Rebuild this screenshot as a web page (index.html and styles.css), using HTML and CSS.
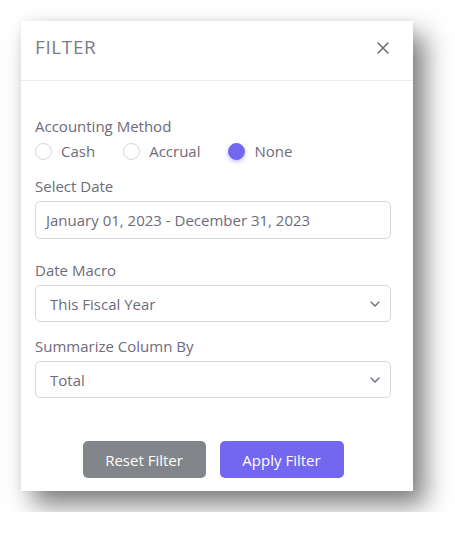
FILE: index.html
```html
<!DOCTYPE html>
<html lang="en">
<head>
<meta charset="utf-8">
<title>Filter</title>
<link rel="stylesheet" href="styles.css">
</head>
<body>
<div class="modal">
  <div class="modal-header">
    <h2 class="modal-title">FILTER</h2>
    <button class="close" aria-label="Close">
      <svg width="12" height="12" viewBox="0 0 12 12"><path d="M1 1L11 11M11 1L1 11" stroke="#6e6b7b" stroke-width="1.6" stroke-linecap="round"/></svg>
    </button>
  </div>
  <div class="modal-body">
    <div class="label">Accounting Method</div>
    <div class="radios">
      <label class="radio"><span class="dot"></span>Cash</label>
      <label class="radio"><span class="dot"></span>Accrual</label>
      <label class="radio"><span class="dot checked"></span>None</label>
    </div>
    <div class="label label-date">Select Date</div>
    <div class="input">January 01, 2023 - December 31, 2023</div>
    <div class="label label-macro">Date Macro</div>
    <div class="select"><span>This Fiscal Year</span>
      <svg width="10" height="6" viewBox="0 0 10 6"><path d="M1 1L5 5L9 1" fill="none" stroke="#6e6b7b" stroke-width="1.4" stroke-linecap="round" stroke-linejoin="round"/></svg>
    </div>
    <div class="label label-sum">Summarize Column By</div>
    <div class="select"><span>Total</span>
      <svg width="10" height="6" viewBox="0 0 10 6"><path d="M1 1L5 5L9 1" fill="none" stroke="#6e6b7b" stroke-width="1.4" stroke-linecap="round" stroke-linejoin="round"/></svg>
    </div>
    <div class="actions">
      <button class="btn btn-reset">Reset Filter</button>
      <button class="btn btn-apply">Apply Filter</button>
    </div>
  </div>
</div>
</body>
</html>
```
FILE: styles.css
```css
* { box-sizing: border-box; }
html, body { margin: 0; background: #fff; }
body {
  padding: 21px;
  font-family: "Open Sans", "Liberation Sans", sans-serif;
  color: #6e6b7b;
  font-size: 15px;
}
.modal {
  width: 392px;
  height: 470px;
  background: #fff;
  box-shadow: 12px 14px 24px rgba(0,0,0,0.5), 0 0 8px rgba(0,0,0,0.06);
}
.modal-header {
  display: flex;
  align-items: center;
  justify-content: space-between;
  padding: 14px 24px 21px 14px;
  border-bottom: 1px solid #ebe9f1;
}
.modal-title {
  margin: 0;
  font-size: 19px;
  font-weight: 400;
  line-height: 24px;
  color: #7d7a89;
  letter-spacing: 0.6px;
}
.close {
  border: 0;
  background: none;
  padding: 0;
  width: 12px;
  height: 12px;
  display: flex;
  margin-top: 2px;
}
.modal-body {
  padding: 35px 22px 0 14px;
}
.label {
  line-height: 20px;
  font-size: 15px;
  color: #6e6b7b;
}
.radios {
  display: flex;
  gap: 28px;
  margin-top: 5px;
  height: 20px;
  align-items: center;
}
.radio {
  display: flex;
  align-items: center;
  gap: 9px;
  font-size: 15px;
}
.dot {
  width: 17px;
  height: 17px;
  border-radius: 50%;
  border: 1px solid #d8d6de;
  background: #fff;
}
.dot.checked {
  background: #7367f0;
  border-color: #7367f0;
  box-shadow: 0 2px 4px rgba(115,103,240,0.4);
}
.label-date { margin-top: 15px; }
.label-macro { margin-top: 21px; }
.label-sum { margin-top: 14px; }
.input {
  margin-top: 5px;
  height: 38px;
  border: 1px solid #d8d6de;
  border-radius: 5px;
  padding: 0 10px;
  display: flex;
  align-items: center;
  font-size: 15px;
  color: #6e6b7b;
}
.select {
  margin-top: 5px;
  height: 37px;
  border: 1px solid #d8d6de;
  border-radius: 5px;
  padding: 0 10px 0 14px;
  display: flex;
  align-items: center;
  justify-content: space-between;
  font-size: 15px;
  color: #6e6b7b;
}
.actions {
  display: flex;
  justify-content: center;
  gap: 14px;
  margin-top: 43px;
}
.btn {
  width: 123px;
  height: 37px;
  border: 0;
  border-radius: 5px;
  color: #fff;
  font-family: inherit;
  font-size: 15px;
  font-weight: 500;
}
.btn-reset { background: #82868b; }
.btn-apply { background: #7367f0; width: 124px; }
```
